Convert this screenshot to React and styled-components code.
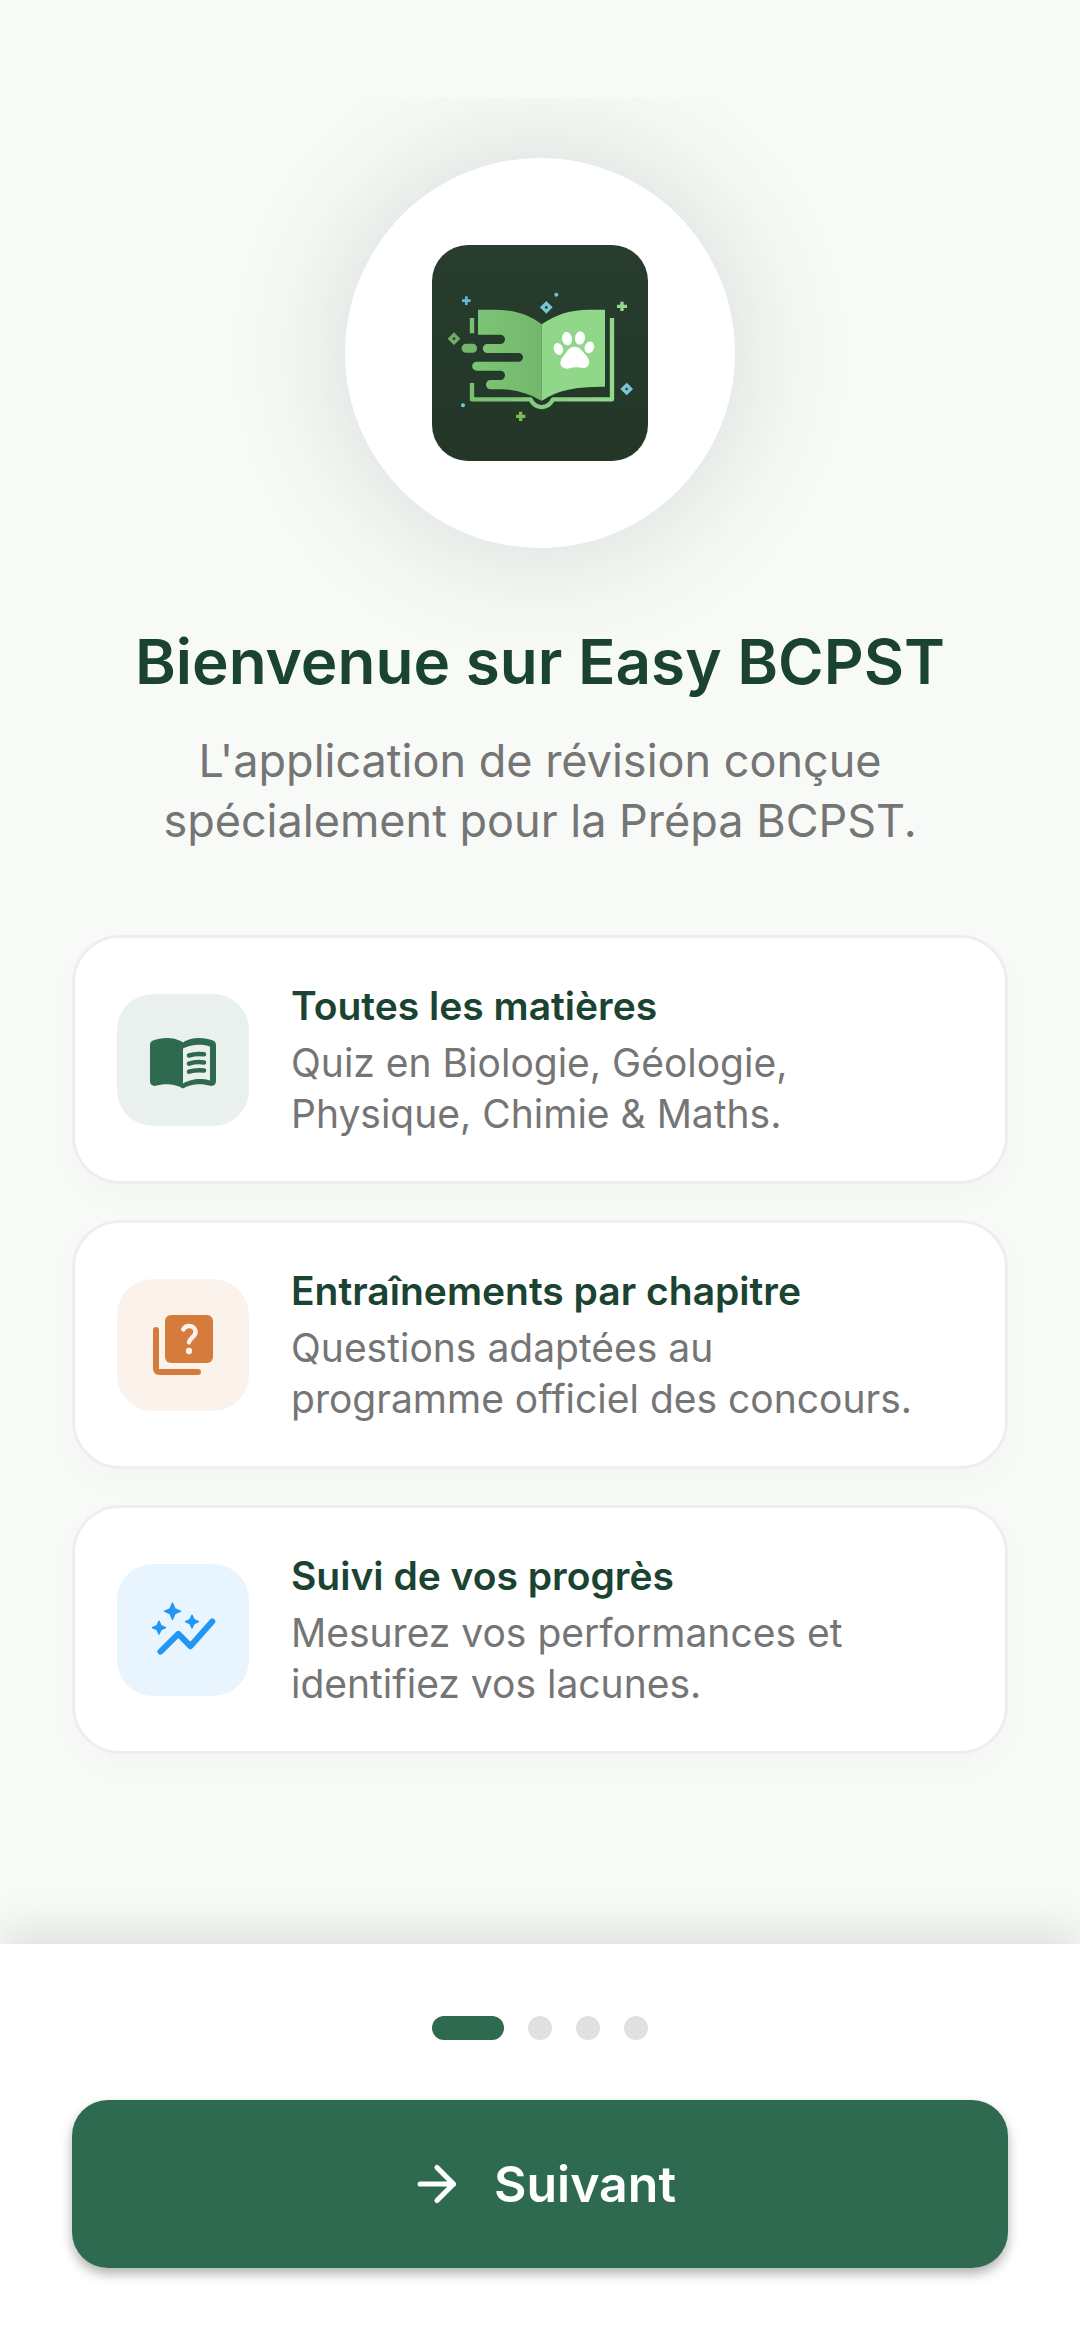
import React, { useState } from 'react';
import styled, { createGlobalStyle } from 'styled-components';

const features = [
  {
    title: 'Toutes les matières',
    text: 'Quiz en Biologie, Géologie,\nPhysique, Chimie & Maths.',
    color: '#2d6a4f',
    tint: '#eaf0ed',
    icon: <BookIcon />,
  },
  {
    title: 'Entraînements par chapitre',
    text: 'Questions adaptées au\nprogramme officiel des concours.',
    color: '#d57c3d',
    tint: '#fbf2ec',
    icon: <QuizIcon />,
  },
  {
    title: 'Suivi de vos progrès',
    text: 'Mesurez vos performances et\nidentifiez vos lacunes.',
    color: '#2196f3',
    tint: '#e8f4fe',
    icon: <GraphIcon />,
  },
];

const steps = ['Bienvenue', 'Matières', 'Objectifs', 'Profil'];

export default function App() {
  const [step, setStep] = useState(0);

  return (
    <Screen>
      <GlobalStyle />
      <StatusBar />
      <Content>
        <LogoCircle>
          <Logo />
        </LogoCircle>
        <Title>Bienvenue sur Easy BCPST</Title>
        <Subtitle>
          {"L'application de révision conçue\nspécialement pour la Prépa BCPST."}
        </Subtitle>
        <FeatureList>
          {features.map(feature => (
            <FeatureCard key={feature.title}>
              <IconBox $color={feature.color} $tint={feature.tint}>
                {feature.icon}
              </IconBox>
              <div>
                <FeatureTitle>{feature.title}</FeatureTitle>
                <FeatureText>{feature.text}</FeatureText>
              </div>
            </FeatureCard>
          ))}
        </FeatureList>
      </Content>
      <Footer>
        <Dots>
          {steps.map((name, i) => (
            <Dot
              key={name}
              type="button"
              aria-label={name}
              $active={i === step}
              onClick={() => setStep(i)}
            />
          ))}
        </Dots>
        <NextButton
          type="button"
          onClick={() => setStep((step + 1) % steps.length)}
        >
          <ArrowIcon />
          Suivant
        </NextButton>
      </Footer>
    </Screen>
  );
}

function BookIcon() {
  return (
    <svg viewBox="0 0 24 24" fill="currentColor" aria-hidden="true">
      <path
        fillRule="evenodd"
        d="M1 7.1C1 6.3 1.3 5.8 2 5.5 3.3 5 5 4.7 6.5 4.7c1.95 0 4.05.4 5.5 1.5 1.45-1.1 3.55-1.5 5.5-1.5 1.5 0 3.2.3 4.5.8.7.3 1 .8 1 1.6v12c0 1.1-.9 1.7-1.9 1.5-1.1-.3-2.4-.5-3.6-.5-1.7 0-4 .5-5.1 1.2q-.4.2-.8 0C10.5 20.6 8.2 20.1 6.5 20.1c-1.2 0-2.5.2-3.6.5-1 .2-1.9-.4-1.9-1.5zM12 8.2v11.6c1.35-.85 3.8-1.5 5.5-1.5 1.2 0 2.4.15 3.5.5V7.5c-1.1-.45-2.3-.6-3.5-.6-1.7 0-4.15.5-5.5 1.3z"
      />
      <path
        d="M14 10.5c1.5-.5 3.3-.6 5-.4M14 13.2c1.5-.5 3.3-.6 5-.4M14 15.9c1.5-.5 3.3-.6 5-.4"
        fill="none"
        stroke="currentColor"
        strokeWidth="1.5"
        strokeLinecap="round"
      />
    </svg>
  );
}

function QuizIcon() {
  return (
    <svg viewBox="0 0 24 24" fill="none" stroke="currentColor" aria-hidden="true">
      <rect x="6" y="2" width="16" height="16" rx="2" fill="currentColor" stroke="none" />
      <path d="M3 7v13c0 .6.4 1 1 1h13" strokeWidth="2" strokeLinecap="round" />
      <path
        d="M12.1 6.8c.4-.7 1.1-1.1 1.9-1.1 1.3 0 2.2.9 2.2 2 0 1.5-2 1.900-2.2 3.4"
        stroke="#fbf2ec"
        strokeWidth="1.5"
        strokeLinecap="round"
      />
      <circle cx="14" cy="14" r="1.05" fill="#fbf2ec" stroke="none" />
    </svg>
  );
}

function GraphIcon() {
  return (
    <svg viewBox="0 0 24 24" fill="currentColor" aria-hidden="true">
      <path
        d="M4.5 19.2l5.95-5.9 4 4.1 7.3-8.25"
        fill="none"
        stroke="currentColor"
        strokeWidth="2"
        strokeLinecap="round"
        strokeLinejoin="round"
      />
      <path
        d="M8.5 3l.85 1.9 1.9.85-1.9.85-.85 1.9-.85-1.9-1.9-.85 1.9-.85zM4 9l.7 1.5 1.5.7-1.5.7-.7 1.5-.7-1.5-1.5-.7 1.5-.7zM15 7l.7 1.5 1.5.7-1.5.7-.7 1.5-.7-1.5-1.5-.7 1.5-.7z"
        stroke="currentColor"
        strokeWidth=".4"
        strokeLinejoin="round"
      />
    </svg>
  );
}

function ArrowIcon() {
  return (
    <svg
      viewBox="0 0 24 24"
      fill="none"
      stroke="currentColor"
      strokeWidth="1.9"
      strokeLinecap="round"
      strokeLinejoin="round"
      aria-hidden="true"
    >
      <path d="M5.9 12H18M12 6l6 6-6 6" />
    </svg>
  );
}

function Logo() {
  return (
    <svg viewBox="66 43 648 648" role="img" aria-label="Easy BCPST">
      <defs>
        <linearGradient id="tile" x1="0" y1="0" x2="0" y2="1">
          <stop offset="0" stopColor="#283d2d" />
          <stop offset="1" stopColor="#233628" />
        </linearGradient>
        <linearGradient id="leftPage" x1="0" y1="0" x2="1" y2="0">
          <stop offset="0" stopColor="#7cc576" />
          <stop offset="1" stopColor="#74b76c" />
        </linearGradient>
        <linearGradient id="frame" x1="0" y1="0" x2="1" y2="0">
          <stop offset="0" stopColor="#76c072" />
          <stop offset="1" stopColor="#92d98b" />
        </linearGradient>
      </defs>
      <rect x="66" y="43" width="648" height="648" rx="108" fill="url(#tile)" />
      <path
        d="M204 237h50c55 0 105 15 141 44v230c-36-22-78-35-120-35h-33a14 14 0 0 1 0-28h29a14 14 0 0 0 0-28h-71a13 13 0 0 1 0-27h126a13 13 0 0 0 0-26H232a13 13 0 0 1 0-27h39a14 14 0 0 0 0-28h-67z"
        fill="url(#leftPage)"
      />
      <path
        d="M395 281c42-30 88-44 142-44h48v231c-75-1-140 7-190 43z"
        fill="#91d789"
      />
      <rect x="155" y="339" width="46" height="27" rx="13" fill="#74b76c" />
      <path
        d="M186 262v46M186 457v49h175c8 16 19 23 34 23s26-7 34-23h177V262"
        fill="none"
        stroke="url(#frame)"
        strokeWidth="13"
        strokeLinejoin="round"
      />
      <path d="M367 499c9 16 16 23 28 23s21-7 30-23l-30 12z" fill="#243729" />
      <g fill="#fff">
        <ellipse cx="471" cy="324" rx="15" ry="20" transform="rotate(-10 471 324)" />
        <ellipse cx="510" cy="322" rx="15" ry="20" transform="rotate(8 510 322)" />
        <ellipse cx="445" cy="355" rx="14" ry="18" transform="rotate(-20 445 355)" />
        <ellipse cx="538" cy="350" rx="14" ry="18" transform="rotate(20 538 350)" />
        <path d="M493 348c-17 0-22 16-33 29-16 19-9 37 11 37 10 0 15-4 25-4s15 2 23 2c19 0 25-19 11-36-12-13-20-28-37-28z" />
      </g>
      <g fill="none" strokeWidth="10">
        <path d="M409 218l12 12-12 12-12-12z" stroke="#78c6d4" />
        <path d="M650 463l12 12-12 12-12-12z" stroke="#78c6d4" />
        <path d="M132 312l12 12-12 12-12-12z" stroke="#6fad64" />
        <path d="M169 197v26M156 210h26" stroke="#62b9dd" strokeWidth="8" />
        <path d="M636 213v28M621 227h30" stroke="#92d98b" strokeWidth="10" />
        <path d="M332 543v28M318 557h28" stroke="#7cb950" strokeWidth="10" />
      </g>
      <circle cx="439" cy="192" r="6" fill="#6cc4cf" />
      <circle cx="159" cy="524" r="6" fill="#62cfe0" />
    </svg>
  );
}

const GlobalStyle = createGlobalStyle`
  * {
    box-sizing: border-box;
  }

  body {
    margin: 0;
    background: #f8faf7;
    font-family: Inter, 'Open Sans', sans-serif;
  }

  h1,
  h2,
  p,
  ul {
    margin: 0;
    padding: 0;
  }
`;

const Screen = styled.div`
  display: flex;
  flex-direction: column;
  height: 100vh;
`;

const StatusBar = styled.div`
  flex: none;
  height: 98px;
`;

const Content = styled.main`
  flex: 1;
  min-height: 0;
  overflow: auto;
  scrollbar-width: none;
  display: flex;
  flex-direction: column;
  align-items: center;
  padding: 60px 72px;
`;

const LogoCircle = styled.div`
  flex: none;
  display: flex;
  align-items: center;
  justify-content: center;
  width: 390px;
  height: 390px;
  border-radius: 50%;
  background: #fff;
  box-shadow: 0 0 108px 15px rgba(27, 67, 65, 0.13);

  svg {
    width: 216px;
    height: 216px;
  }
`;

const Title = styled.h1`
  margin-top: 72px;
  color: #1b4332;
  font-size: 62px;
  font-weight: 600;
  line-height: 84px;
  text-align: center;
`;

const Subtitle = styled.p`
  margin-top: 27px;
  color: #757575;
  font-size: 45px;
  line-height: 60px;
  text-align: center;
  white-space: pre-line;
`;

const FeatureList = styled.ul`
  display: flex;
  flex-direction: column;
  gap: 36px;
  width: 100%;
  margin-top: 84px;
  list-style: none;
`;

const FeatureCard = styled.li`
  display: flex;
  align-items: center;
  gap: 42px;
  padding: 42px;
  border: 3px solid #eee;
  border-radius: 48px;
  background: #fff;
  box-shadow: 0 12px 36px rgba(0, 0, 0, 0.02);
`;

const IconBox = styled.div`
  flex: none;
  display: flex;
  align-items: center;
  justify-content: center;
  width: 132px;
  height: 132px;
  border-radius: 36px;
  color: ${props => props.$color};
  background: ${props => props.$tint};

  svg {
    width: 72px;
    height: 72px;
  }
`;

const FeatureTitle = styled.h2`
  color: #1b4332;
  font-size: 39px;
  font-weight: 600;
  line-height: 51px;
`;

const FeatureText = styled.p`
  margin-top: 6px;
  color: #757575;
  font-size: 39px;
  line-height: 51px;
  white-space: pre-line;
`;

const Footer = styled.footer`
  flex: none;
  display: flex;
  flex-direction: column;
  gap: 60px;
  padding: 72px;
  background: #fff;
  box-shadow: 0 -15px 39px rgba(0, 0, 0, 0.1);
`;

const Dots = styled.div`
  display: flex;
  justify-content: center;
  gap: 24px;
`;

const Dot = styled.button`
  width: ${props => (props.$active ? '72px' : '24px')};
  height: 24px;
  padding: 0;
  border: none;
  border-radius: 12px;
  background: ${props => (props.$active ? '#2d6a4f' : '#e0e0e0')};
  cursor: pointer;
`;

const NextButton = styled.button`
  display: flex;
  align-items: center;
  justify-content: center;
  gap: 24px;
  height: 168px;
  border: none;
  border-radius: 36px;
  color: #fff;
  background: #2d6a4f;
  box-shadow: 0 6px 12px rgba(0, 0, 0, 0.3);
  font-family: inherit;
  font-size: 50px;
  font-weight: 600;
  cursor: pointer;

  svg {
    width: 66px;
    height: 66px;
  }
`;
